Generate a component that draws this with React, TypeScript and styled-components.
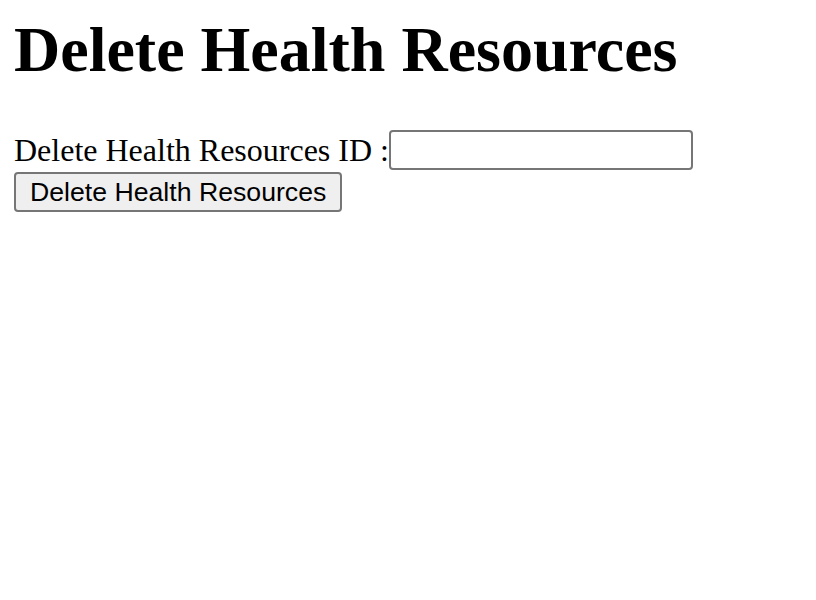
import styled, { createGlobalStyle } from 'styled-components'

const GlobalStyle = createGlobalStyle`
  html, body {
    margin: 0;
    background: #ffffff;
  }
`

const Page = styled.div`
  padding: 13px 14px 0;
  font-family: 'Liberation Serif', 'Times New Roman', serif;
  color: #000000;
`

const Title = styled.h1`
  margin: 0 0 43px;
  font-size: 64px;
  font-weight: 700;
  line-height: normal;
`

const Form = styled.form`
  display: flex;
  flex-direction: column;
  align-items: flex-start;
  gap: 2px;
`

const Row = styled.div`
  display: flex;
  align-items: center;
`

const Label = styled.label`
  font-size: 32px;
  line-height: normal;
`

const Input = styled.input`
  box-sizing: border-box;
  width: 304px;
  height: 40px;
  margin: 0;
  padding: 2px 4px;
  border: 2px solid #767676;
  border-radius: 4px;
  background: #ffffff;
  font-size: 26px;
`

const Button = styled.button`
  box-sizing: border-box;
  height: 40px;
  padding: 0 14px;
  border: 2px solid #767676;
  border-radius: 4px;
  background: #efefef;
  color: #000000;
  font-family: 'Liberation Sans', Arial, sans-serif;
  font-size: 26.67px;
`

export default function App() {
  return (
    <>
      <GlobalStyle />
      <Page>
        <Title>Delete Health Resources</Title>
        <Form onSubmit={(e) => e.preventDefault()}>
          <Row>
            <Label htmlFor="resource-id">Delete Health Resources ID :</Label>
            <Input id="resource-id" type="text" />
          </Row>
          <Button type="submit">Delete Health Resources</Button>
        </Form>
      </Page>
    </>
  )
}
